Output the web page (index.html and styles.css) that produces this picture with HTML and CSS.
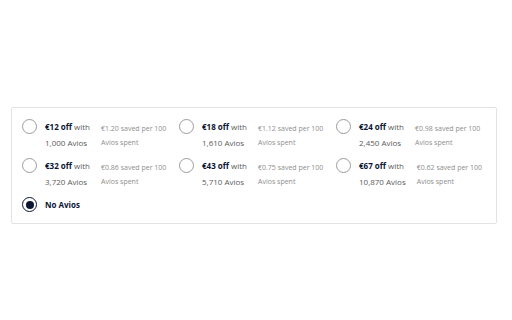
FILE: index.html
```html
<!DOCTYPE html>
<html lang="en">
<head>
	<meta charset="UTF-8">
	<title>Pay with Avios</title>
	<link rel="stylesheet" href="styles.css">
</head>
<body>
	<div class="box">
		<ul class="options">
			<li class="option">
				<span class="radio"></span>
				<div class="label"><b>€12 off</b> with<br>1,000 Avios</div>
				<div class="rate">€1.20 saved per 100<br>Avios spent</div>
			</li>
			<li class="option">
				<span class="radio"></span>
				<div class="label"><b>€18 off</b> with<br>1,610 Avios</div>
				<div class="rate">€1.12 saved per 100<br>Avios spent</div>
			</li>
			<li class="option">
				<span class="radio"></span>
				<div class="label"><b>€24 off</b> with<br>2,450 Avios</div>
				<div class="rate">€0.98 saved per 100<br>Avios spent</div>
			</li>
			<li class="option">
				<span class="radio"></span>
				<div class="label"><b>€32 off</b> with<br>3,720 Avios</div>
				<div class="rate">€0.86 saved per 100<br>Avios spent</div>
			</li>
			<li class="option">
				<span class="radio"></span>
				<div class="label"><b>€43 off</b> with<br>5,710 Avios</div>
				<div class="rate">€0.75 saved per 100<br>Avios spent</div>
			</li>
			<li class="option">
				<span class="radio"></span>
				<div class="label"><b>€67 off</b> with<br>10,870 Avios</div>
				<div class="rate">€0.62 saved per 100<br>Avios spent</div>
			</li>
			<li class="option">
				<span class="radio checked"></span>
				<div class="label"><b>No Avios</b></div>
			</li>
		</ul>
	</div>
</body>
</html>
```

FILE: styles.css
```css
*{padding: 0;margin: 0;box-sizing: border-box;}
body{
	background: #fff;
	font-family: "Open Sans", "Noto Sans", sans-serif;
}
.box{
	width: 486px;
	margin: 107px 0 0 11px;
	border: 1px solid #e3e3e3;
	border-radius: 2px;
	padding: 11px 10px 10px 10px;
}
.options{
	list-style: none;
	display: grid;
	grid-template-columns: 157px 157px 157px;
	row-gap: 7px;
}
.option{
	display: flex;
	align-items: flex-start;
}
.radio{
	width: 15px;
	height: 15px;
	flex: none;
	border: 1px solid #9c9c9c;
	border-radius: 50%;
	margin-right: 8px;
	display: flex;
	align-items: center;
	justify-content: center;
}
.radio.checked{
	border: 1.5px solid #0b1533;
}
.radio.checked::after{
	content: "";
	width: 8px;
	height: 8px;
	border-radius: 50%;
	background: #0b1533;
}
.label{
	font-size: 8px;
	line-height: 16px;
	color: #5a5a5a;
	margin-right: 11px;
	white-space: nowrap;
}
.label b{
	color: #0b1533;
	font-weight: 700;
}
.rate{
	font-size: 7px;
	line-height: 14px;
	color: #8e8e8e;
	margin-top: 3px;
	white-space: nowrap;
}
```
